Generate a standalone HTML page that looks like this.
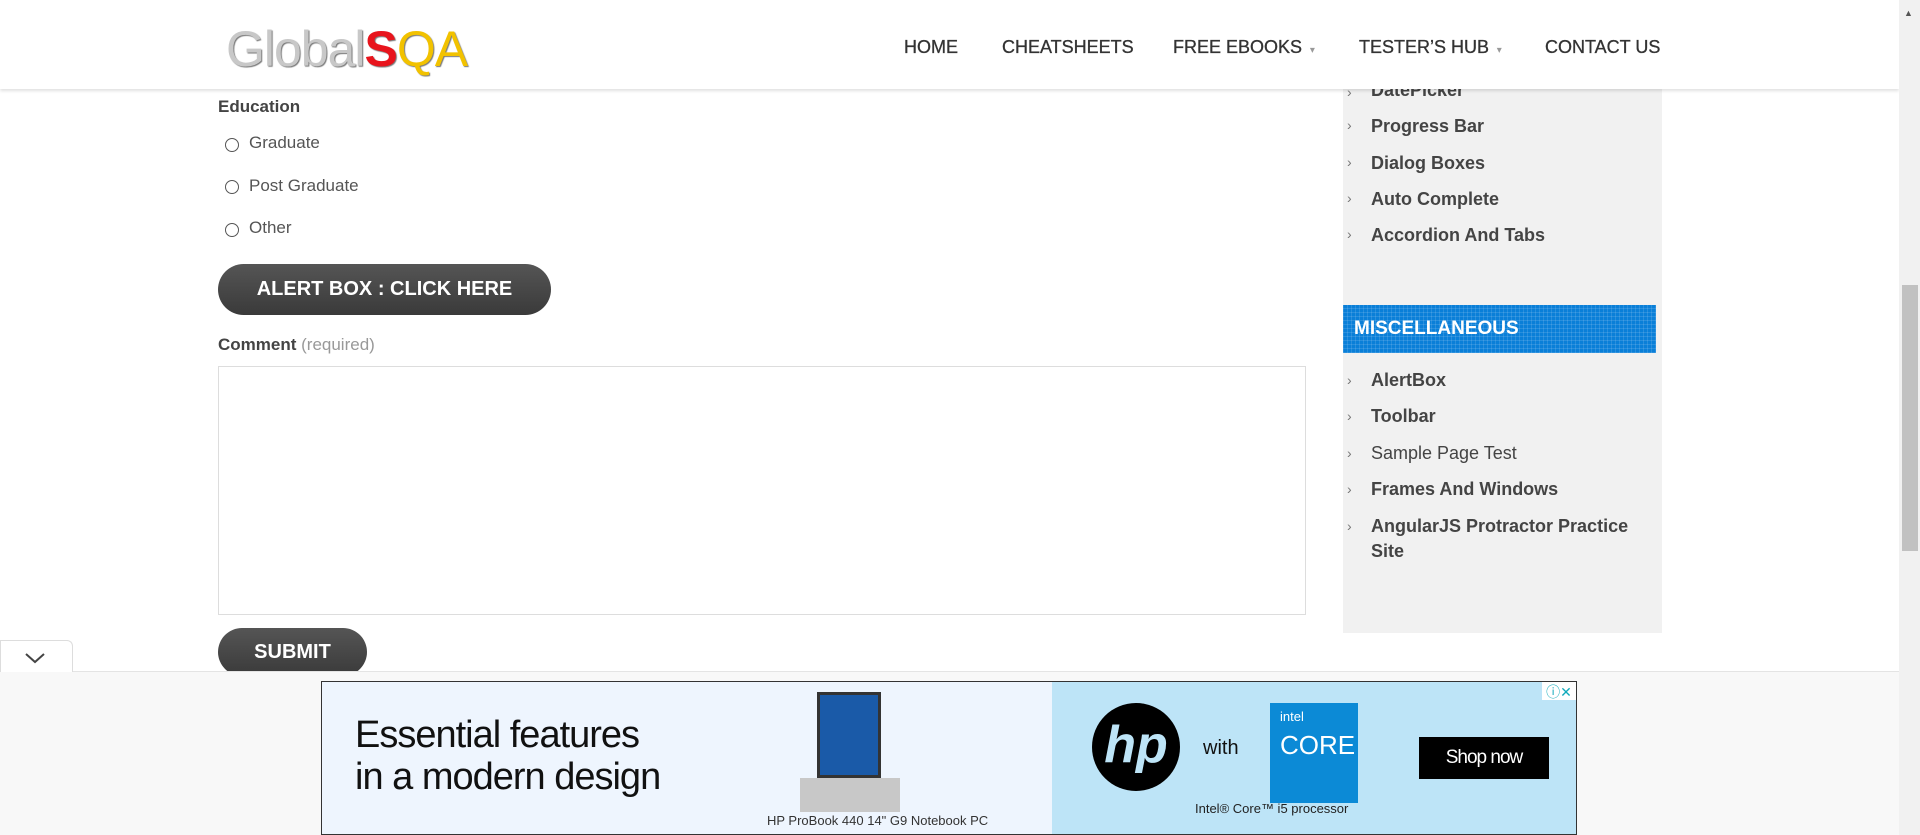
<!DOCTYPE html>
<html><head><meta charset="utf-8"><style>
*{margin:0;padding:0;box-sizing:border-box}
body{width:1920px;height:835px;overflow:hidden;background:#fff;font-family:"Liberation Sans",sans-serif;position:relative;color:#444}
.a{position:absolute;white-space:nowrap}
.nav{font-size:18px;color:#333;top:37px;-webkit-text-stroke:0.3px #333}
.side{position:absolute;left:1343px;top:0;width:319px;height:633px;background:#f1f1f1}
.si{position:absolute;left:1371px;font-size:18px;font-weight:bold;color:#444;white-space:nowrap}
.ar{position:absolute;left:1347px;font-size:14px;color:#777}
.radio{position:absolute;left:225px;width:14px;height:14px;border:1px solid #555;border-radius:50%}
.rt{position:absolute;left:249px;font-size:17px;color:#555}
</style></head><body>
<div class="side"></div>
<div class="ar" style="top:10px">›</div><div class="si" style="top:6px;color:#999">Sliders</div>
<div class="ar" style="top:84px">›</div><div class="si" style="top:80px">DatePicker</div>
<div class="ar" style="top:117px">›</div><div class="si" style="top:116px">Progress Bar</div>
<div class="ar" style="top:154px">›</div><div class="si" style="top:153px">Dialog Boxes</div>
<div class="ar" style="top:190px">›</div><div class="si" style="top:189px">Auto Complete</div>
<div class="ar" style="top:226px">›</div><div class="si" style="top:225px">Accordion And Tabs</div>
<div class="a" style="left:1343px;top:305px;width:313px;height:48px;background:#0a7fd8;background-image:repeating-linear-gradient(0deg,rgba(255,255,255,.12) 0 1px,transparent 1px 4px),repeating-linear-gradient(90deg,rgba(255,255,255,.12) 0 1px,transparent 1px 4px)"></div>
<div class="a" style="left:1354px;top:318px;font-size:19px;font-weight:bold;color:#fff">MISCELLANEOUS</div>
<div class="ar" style="top:372px">›</div><div class="si" style="top:370px">AlertBox</div>
<div class="ar" style="top:408px">›</div><div class="si" style="top:406px">Toolbar</div>
<div class="ar" style="top:445px">›</div><div class="si" style="top:443px;font-weight:normal">Sample Page Test</div>
<div class="ar" style="top:481px">›</div><div class="si" style="top:479px">Frames And Windows</div>
<div class="ar" style="top:518px">›</div><div class="si" style="top:516px">AngularJS Protractor Practice</div>
<div class="si" style="top:541px">Site</div>

<div class="a" style="left:0;top:0;width:1899px;height:89px;background:#fff;box-shadow:0 2px 3px rgba(0,0,0,.12)"></div>
<div class="a" style="left:226px;top:20px;font-size:50px;color:#c8c8c8;text-shadow:1px 1px 1px #777;letter-spacing:-1px">Global<span style="color:#e8141c;font-weight:bold">S</span><span style="color:#f2c200">QA</span></div>
<div class="a nav" style="left:904px">HOME</div>
<div class="a nav" style="left:1002px">CHEATSHEETS</div>
<div class="a nav" style="left:1173px">FREE EBOOKS <span style="font-size:10px;color:#999;-webkit-text-stroke:0">&nbsp;▾</span></div>
<div class="a nav" style="left:1359px">TESTER’S HUB <span style="font-size:10px;color:#999;-webkit-text-stroke:0">&nbsp;▾</span></div>
<div class="a nav" style="left:1545px">CONTACT US</div>

<div class="a" style="left:218px;top:97px;font-size:17px;font-weight:bold;color:#444">Education</div>
<div class="radio" style="top:138px"></div><div class="rt" style="top:133px">Graduate</div>
<div class="radio" style="top:180px"></div><div class="rt" style="top:176px">Post Graduate</div>
<div class="radio" style="top:223px"></div><div class="rt" style="top:218px">Other</div>
<div class="a" style="left:218px;top:264px;width:333px;height:51px;border-radius:26px;background:linear-gradient(#555,#3a3a3a);color:#fff;font-weight:bold;font-size:20px;text-align:center;line-height:51px">ALERT BOX : CLICK HERE</div>
<div class="a" style="left:218px;top:335px;font-size:17px;font-weight:bold;color:#444">Comment <span style="font-weight:normal;color:#999">(required)</span></div>
<div class="a" style="left:218px;top:366px;width:1088px;height:249px;border:1px solid #ddd"></div>
<div class="a" style="left:218px;top:628px;width:149px;height:48px;border-radius:24px;background:linear-gradient(#555,#3a3a3a);color:#fff;font-weight:bold;font-size:20px;text-align:center;line-height:48px">SUBMIT</div>

<div class="a" style="left:1899px;top:0;width:21px;height:835px;background:#f1f1f1"></div>
<div class="a" style="left:1902px;top:285px;width:16px;height:266px;background:#c1c1c1"></div>
<div class="a" style="left:1904px;top:8px;font-size:9px;color:#555">▲</div>

<div class="a" style="left:0;top:671px;width:1899px;height:164px;background:#f8f8f8;border-top:1px solid #e4e4e4"></div>
<div class="a" style="left:0;top:640px;width:73px;height:32px;background:#fff;border:1px solid #ddd;border-bottom:none;border-radius:0 6px 0 0"></div>
<svg class="a" style="left:24px;top:652px" width="22" height="12"><path d="M2 2 L11 10 L20 2" fill="none" stroke="#444" stroke-width="2"/></svg>

<div class="a" style="left:321px;top:681px;width:1256px;height:154px;border:1px solid #333;background:#eef5fe;overflow:hidden">
 <div class="a" style="left:730px;top:0;width:526px;height:154px;background:#bde4f7"></div>
 <div class="a" style="left:33px;top:32px;font-size:38px;line-height:42px;color:#111;letter-spacing:-1px">Essential features<br>in a modern design</div>
 <div class="a" style="left:495px;top:10px;width:64px;height:86px;background:#1a5aa8;border:3px solid #333"></div>
 <div class="a" style="left:478px;top:96px;width:100px;height:34px;background:#c8c8c8"></div>
 <div class="a" style="left:445px;top:131px;font-size:13px;color:#333">HP ProBook 440 14" G9 Notebook PC</div>
 <div class="a" style="left:770px;top:21px;width:88px;height:88px;border-radius:50%;background:#000;color:#bde4f7;font-size:52px;font-style:italic;font-weight:bold;text-align:center;line-height:84px">hp</div>
 <div class="a" style="left:881px;top:55px;font-size:20px;color:#111">with</div>
 <div class="a" style="left:948px;top:21px;width:88px;height:100px;background:#0c8ad6;color:#fff"><div style="padding:6px 10px;font-size:13px">intel</div><div style="padding:0 10px;font-size:26px">CORE</div></div>
 <div class="a" style="left:873px;top:119px;font-size:13px;color:#222">Intel® Core™ i5 processor</div>
 <div class="a" style="left:1097px;top:55px;width:130px;height:42px;background:#000;color:#fff;font-size:19px;text-align:center;line-height:42px;letter-spacing:-1px">Shop now</div>
 <div class="a" style="left:1220px;top:0;width:34px;height:18px;background:#fff;color:#1ab;font-size:14px;text-align:center">ⓘ✕</div>
</div>
</body></html>
